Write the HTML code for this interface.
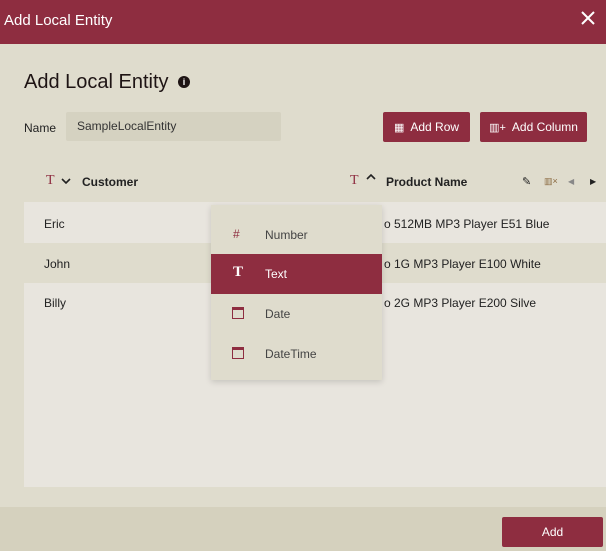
<!DOCTYPE html>
<html><head><style>
body{margin:0;width:606px;height:551px;overflow:hidden;background:#dfdccd;font-family:"Liberation Sans",sans-serif;position:relative;color:#222}
.a{position:absolute}
.hdr{left:0;top:0;width:606px;height:44px;background:#8e2d40;color:#fff}
.btn{background:#8e2d40;color:#fff;border-radius:2px;font-size:12px;display:flex;align-items:center;justify-content:center}
.row{left:24px;width:582px;height:40px;font-size:12px;color:#222}
.it{left:0;width:171px;height:40px;font-size:12px;color:#444}
</style></head><body>
<div class="a hdr"><div class="a" style="left:4px;top:12px;font-size:15px">Add Local Entity</div>
<svg class="a" style="left:581px;top:11px" width="14" height="14"><path d="M1 1L13 13M13 1L1 13" stroke="#fff" stroke-width="2"/></svg></div>
<div class="a" style="left:24px;top:71px;font-size:20px;color:#1e1414">Add Local Entity</div>
<div class="a" style="left:178px;top:76px;width:12px;height:12px;border-radius:50%;background:#1e1414;color:#fff;font-size:9px;font-weight:bold;text-align:center;line-height:12px">i</div>
<div class="a" style="left:24px;top:121px;font-size:12px">Name</div>
<div class="a" style="left:66px;top:112px;width:215px;height:29px;background:#d5d2c1;border-radius:2px;font-size:12px;line-height:29px;text-indent:11px;color:#333">SampleLocalEntity</div>
<div class="a btn" style="left:383px;top:112px;width:87px;height:30px"><span style="font-size:11px;margin-right:6px">▦</span>Add Row</div>
<div class="a btn" style="left:480px;top:112px;width:107px;height:30px"><span style="font-size:11px;margin-right:6px">▥+</span>Add Column</div>
<div class="a" style="left:46px;top:173px;font-size:14px;color:#8e2d40;font-family:'Liberation Serif',serif">T</div>
<svg class="a" style="left:61px;top:178px" width="10" height="6"><path d="M1 1L5 5L9 1" stroke="#222" stroke-width="1.6" fill="none"/></svg>
<div class="a" style="left:82px;top:175px;font-size:12px;font-weight:bold">Customer</div>
<div class="a" style="left:350px;top:173px;font-size:14px;color:#8e2d40;font-family:'Liberation Serif',serif">T</div>
<svg class="a" style="left:366px;top:174px" width="10" height="6"><path d="M1 5L5 1L9 5" stroke="#222" stroke-width="1.6" fill="none"/></svg>
<div class="a" style="left:386px;top:175px;font-size:12px;font-weight:bold">Product Name</div>
<div class="a" style="left:522px;top:175px;font-size:11px">✎</div>
<div class="a" style="left:544px;top:176px;font-size:9px;color:#8a6a40">▥×</div>
<div class="a" style="left:568px;top:177px;font-size:8px;color:#888">◀</div>
<div class="a" style="left:590px;top:177px;font-size:8px">▶</div>
<div class="a" style="left:24px;top:202px;width:582px;height:285px;background:#e8e5de"></div>
<div class="a row" style="top:203px"><span class="a" style="left:20px;top:14px">Eric</span><span class="a" style="left:360px;top:14px">o 512MB MP3 Player E51 Blue</span></div>
<div class="a row" style="top:243px;background:#dfdccd"><span class="a" style="left:20px;top:14px">John</span><span class="a" style="left:360px;top:14px">o 1G MP3 Player E100 White</span></div>
<div class="a row" style="top:283px"><span class="a" style="left:20px;top:13px">Billy</span><span class="a" style="left:360px;top:13px">o 2G MP3 Player E200 Silve</span></div>
<div class="a" style="left:211px;top:205px;width:171px;height:175px;background:#dfdccd;box-shadow:0 2px 6px rgba(0,0,0,.15)">
<div class="a it" style="top:10px"><span class="a" style="left:22px;top:12px;color:#8e2d40">#</span><span class="a" style="left:54px;top:13px">Number</span></div>
<div class="a it" style="top:49px;background:#8e2d40;color:#fff"><span class="a" style="left:22px;top:10px;font-family:'Liberation Serif',serif;font-size:15px;font-weight:bold">T</span><span class="a" style="left:54px;top:13px">Text</span></div>
<div class="a it" style="top:89px"><span class="a" style="left:21px;top:13px;width:12px;height:12px;border:1px solid #8e2d40;border-top-width:3px;box-sizing:border-box"></span><span class="a" style="left:54px;top:13px">Date</span></div>
<div class="a it" style="top:129px"><span class="a" style="left:21px;top:13px;width:12px;height:12px;border:1px solid #8e2d40;border-top-width:3px;box-sizing:border-box"></span><span class="a" style="left:54px;top:13px">DateTime</span></div>
</div>
<div class="a" style="left:0;top:507px;width:606px;height:44px;background:#d5d1be"></div>
<div class="a btn" style="left:502px;top:517px;width:101px;height:30px">Add</div>
</body></html>
